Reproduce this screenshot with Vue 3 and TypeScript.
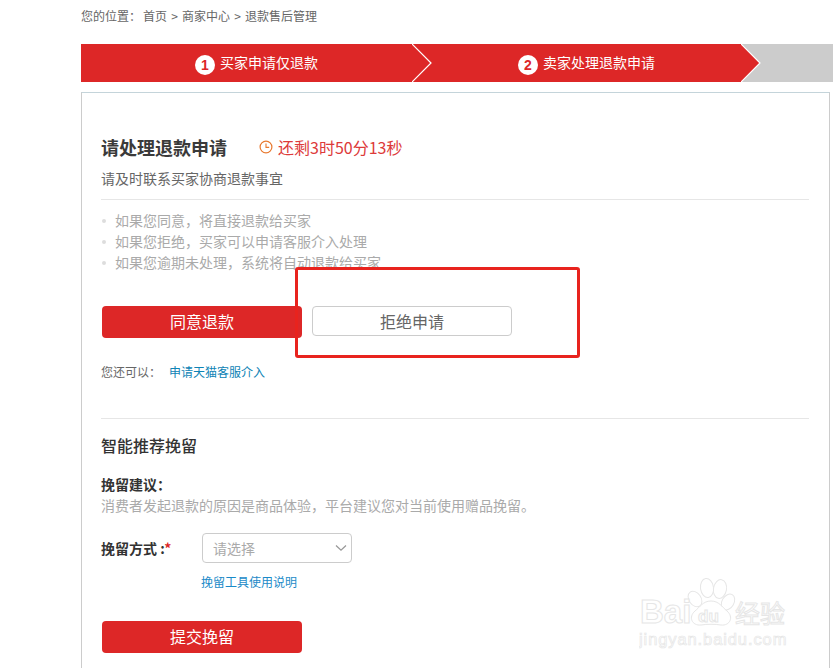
<template>
  <div class="page">
    <div class="crumbs">
      <span>您的位置：</span>
      <span class="crumb-path">首页 &gt; 商家中心 &gt; 退款售后管理</span>
    </div>

    <div class="steps">
      <div v-for="step in steps" :key="step.num" class="step" :class="step.cls">
        <span class="step-num">{{ step.num }}</span>
        <span class="step-label">{{ step.label }}</span>
        <svg class="step-arrow" width="20" height="38" viewBox="0 0 20 38">
          <path d="M0 0 L19 19 L0 38 Z" fill="#dd2727" />
          <path d="M0 0 L19 19 L0 38" fill="none" stroke="#fff" stroke-width="1.2" />
        </svg>
      </div>
    </div>

    <div class="panel">
      <div class="title-row">
        <h2 class="title">请处理退款申请</h2>
        <svg class="clock" width="14" height="14" viewBox="0 0 14 14">
          <circle cx="7" cy="7" r="5.9" fill="none" stroke="#e8792f" stroke-width="1.2" />
          <path d="M7 3.6 V7.4 H10.2" fill="none" stroke="#e8792f" stroke-width="1.1" />
        </svg>
        <span class="timer">还剩3时50分13秒</span>
      </div>
      <p class="sub">请及时联系买家协商退款事宜</p>

      <ul class="tips">
        <li v-for="tip in tips" :key="tip">{{ tip }}</li>
      </ul>

      <div class="actions">
        <button class="btn btn-red">同意退款</button>
        <button class="btn btn-plain">拒绝申请</button>
        <div class="highlight"></div>
      </div>

      <div class="more">
        <span>您还可以：</span>
        <a class="more-link">申请天猫客服介入</a>
      </div>

      <div class="section">
        <h3 class="section-title">智能推荐挽留</h3>
        <div class="label">挽留建议：</div>
        <p class="desc">消费者发起退款的原因是商品体验，平台建议您对当前使用赠品挽留。</p>

        <div class="form-row">
          <span class="label form-label">挽留方式 :<em>*</em></span>
          <div class="select">
            <span>请选择</span>
            <svg width="12" height="8" viewBox="0 0 12 8">
              <path d="M1 1.5 L6 6.2 L11 1.5" fill="none" stroke="#999" stroke-width="1.3" />
            </svg>
          </div>
        </div>
        <a class="tool-link">挽留工具使用说明</a>
        <button class="btn btn-red submit">提交挽留</button>
      </div>
    </div>

    <svg class="watermark" width="150" height="76" viewBox="0 0 150 76">
      <g fill="#fff" stroke="#e6e6e6" stroke-width="1">
        <ellipse cx="56" cy="23" rx="6" ry="8.5" transform="rotate(-35 56 23)" />
        <ellipse cx="68" cy="12" rx="6.5" ry="9.5" transform="rotate(-8 68 12)" />
        <ellipse cx="81" cy="13" rx="6.5" ry="9.5" transform="rotate(10 81 13)" />
        <ellipse cx="89" cy="26" rx="6" ry="8.5" transform="rotate(30 89 26)" />
        <path d="M72 25 C80 25 83 31 88 35 C95 41 91 50 82 49 C76 48 68 48 62 49 C53 50 49 41 56 35 C61 31 64 25 72 25 Z" />
      </g>
      <text class="wm wm-big" x="1" y="47">Bai</text>
      <text class="wm wm-du" x="59" y="46">du</text>
      <text class="wm wm-cn" x="96" y="47">经验</text>
      <text class="wm wm-url" x="0" y="69">jingyan.baidu.com</text>
    </svg>
  </div>
</template>

<script setup lang="ts">
const steps = [
  { num: 1, label: '买家申请仅退款', cls: 'step-one' },
  { num: 2, label: '卖家处理退款申请', cls: 'step-two' }
]

const tips = [
  '如果您同意，将直接退款给买家',
  '如果您拒绝，买家可以申请客服介入处理',
  '如果您逾期未处理，系统将自动退款给买家'
]
</script>

<style>
html, body {
  margin: 0;
  height: 668px;
  overflow: hidden;
  background: #fff;
}
</style>

<style scoped>
.page {
  position: relative;
  height: 668px;
  overflow: hidden;
  padding-left: 81px;
  box-sizing: border-box;
  font-family: "Noto Sans CJK SC", "Liberation Sans", sans-serif;
  font-size: 12px;
  color: #666;
}

.crumbs {
  height: 44px;
  line-height: 31px;
  display: flex;
  gap: 2px;
}
.crumb-path {
  word-spacing: 1.5px;
}

.steps {
  display: flex;
  height: 38px;
  background: #ccc;
}
.step {
  position: relative;
  display: flex;
  align-items: center;
  box-sizing: border-box;
  background: #dd2727;
  color: #fff;
  font-size: 14px;
  gap: 5px;
}
.step-one {
  z-index: 1;
  width: 331px;
  padding-left: 114px;
}
.step-two {
  width: 329px;
  padding-left: 106px;
}
.step-label {
  margin-top: -2px;
}
.step-num {
  width: 20px;
  height: 20px;
  margin-top: 3px;
  border-radius: 50%;
  background: #fff;
  color: #dd2727;
  font-family: "Liberation Sans", sans-serif;
  font-weight: 700;
  font-size: 14px;
  line-height: 20px;
  text-align: center;
}
.step-arrow {
  position: absolute;
  top: 0;
  left: 100%;
}

.panel {
  margin: 10px 3px 0 0;
  padding: 0 20px 0 19px;
  height: 640px;
  border: 1px solid #ccc;
  border-top-color: #c4d4da;
}

.title-row {
  display: flex;
  align-items: center;
  height: 30px;
  margin-top: 39px;
}
.title {
  margin: 0;
  font-size: 18px;
  font-weight: 700;
  color: #3a3a3a;
}
.clock {
  margin-left: 32px;
}
.timer {
  margin-left: 5px;
  font-size: 16px;
  color: #dd3a3a;
}
.sub {
  margin: 6px 0 0;
  height: 31px;
  line-height: 20px;
  font-size: 14px;
  color: #666;
  border-bottom: 1px solid #e6e6e6;
}

.tips {
  list-style: none;
  margin: 10px 0 0;
  padding: 0;
  font-size: 14px;
  line-height: 21px;
  color: #aaa;
}
.tips li {
  position: relative;
  padding-left: 14px;
}
.tips li::before {
  content: "";
  position: absolute;
  left: 1px;
  top: 9px;
  width: 4px;
  height: 4px;
  border-radius: 50%;
  background: #ddd;
}

.actions {
  position: relative;
  display: flex;
  align-items: flex-start;
  gap: 10px;
  margin: 33px 0 0 1px;
}
.btn {
  width: 200px;
  padding: 0;
  box-sizing: border-box;
  border-radius: 4px;
  font-family: inherit;
  font-size: 16px;
}
.btn-red {
  height: 32px;
  padding-bottom: 2px;
  border: 0;
  background: #dd2727;
  color: #fff;
}
.btn-plain {
  height: 30px;
  border: 1px solid #ccc;
  background: #fff;
  color: #666;
}
.highlight {
  position: absolute;
  left: 193px;
  top: -39px;
  width: 285px;
  height: 91px;
  box-sizing: border-box;
  border: 3px solid #e8231e;
  border-radius: 3px;
}

.more {
  display: flex;
  gap: 8px;
  margin-top: 25px;
  line-height: 18px;
}
.more-link {
  color: #0e83b5;
}

.section {
  margin-top: 37px;
  border-top: 1px solid #e6e6e6;
  padding-top: 14px;
}
.section-title {
  margin: 0;
  font-size: 16px;
  font-weight: 500;
  line-height: 24px;
  color: #333;
}
.label {
  margin-top: 17px;
  font-size: 14px;
  font-weight: 700;
  line-height: 20px;
  color: #333;
}
.desc {
  margin: 1px 0 0;
  font-size: 14px;
  line-height: 20px;
  color: #aaa;
}
.form-row {
  display: flex;
  align-items: center;
  margin-top: 18px;
}
.form-label {
  width: 101px;
  margin-top: 0;
}
.form-label em {
  font-style: normal;
  color: #dd2727;
}
.select {
  display: flex;
  align-items: center;
  justify-content: space-between;
  width: 150px;
  height: 30px;
  box-sizing: border-box;
  padding: 0 4px 0 10px;
  border: 1px solid #ccc;
  border-radius: 4px;
  font-size: 14px;
  color: #aaa;
}
.tool-link {
  display: block;
  margin: 10px 0 0 100px;
  line-height: 18px;
  color: #1a8ac8;
}
.submit {
  display: block;
  margin: 30px 0 0 1px;
}

.watermark {
  position: absolute;
  left: 639px;
  top: 576px;
}
.wm {
  fill: #fff;
  stroke: #e6e6e6;
  stroke-width: 1;
  font-family: "Liberation Sans", sans-serif;
}
.wm-big {
  font-size: 33px;
  font-weight: 700;
}
.wm-du {
  font-size: 17px;
  font-weight: 700;
}
.wm-cn {
  font-family: "Noto Sans CJK SC", sans-serif;
  font-size: 25px;
}
.wm-url {
  font-size: 16.5px;
  letter-spacing: 0.9px;
  stroke-width: 0.7;
}
</style>
